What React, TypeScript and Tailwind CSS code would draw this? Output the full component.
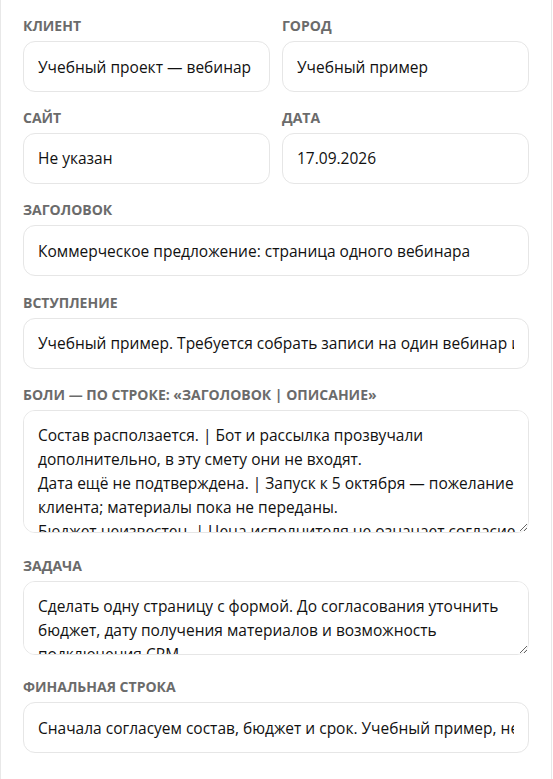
import React from "react";

const font = { fontFamily: '"Open Sans", "Noto Sans", sans-serif' };

function Label({ children }: { children: React.ReactNode }) {
  return (
    <label className="mb-[6px] block text-[14px] font-bold uppercase leading-[18px] text-[#6b6b6b]">
      {children}
    </label>
  );
}

function Input({ value }: { value: string }) {
  return (
    <input
      type="text"
      defaultValue={value}
      className="block h-[51px] w-full rounded-xl border border-[#e6e6e6] bg-white px-[14px] text-[15.5px] leading-[24px] text-[#111] outline-none"
    />
  );
}

function Area({ value, h }: { value: string; h: string }) {
  return (
    <textarea
      defaultValue={value}
      className={`${h} w-full rounded-xl border border-[#e6e6e6] bg-white pl-[14px] pr-[8px] py-[12px] text-[15.5px] leading-[24px] text-[#111] outline-none [scrollbar-width:none]`}
    />
  );
}

export default function App() {
  return (
    <div style={font} className="min-h-screen w-[552px] border-x border-[#e8e8e8] bg-white px-[22px] pt-[17px] pb-6">
      <div className="flex flex-col gap-[17.5px]">
        <div className="grid grid-cols-2 gap-x-3 gap-y-[16.5px]">
          <div>
            <Label>Клиент</Label>
            <Input value="Учебный проект — вебинар" />
          </div>
          <div>
            <Label>Город</Label>
            <Input value="Учебный пример" />
          </div>
          <div>
            <Label>Сайт</Label>
            <Input value="Не указан" />
          </div>
          <div>
            <Label>Дата</Label>
            <Input value="17.09.2026" />
          </div>
        </div>
        <div>
          <Label>Заголовок</Label>
          <Input value="Коммерческое предложение: страница одного вебинара" />
        </div>
        <div>
          <Label>Вступление</Label>
          <Input value="Учебный пример. Требуется собрать записи на один вебинар и подготовить страницу." />
        </div>
        <div>
          <Label>Боли — по строке: «заголовок | описание»</Label>
          <Area
            h="h-[123px]"
            value={
              "Состав расползается. | Бот и рассылка прозвучали дополнительно, в эту смету они не входят.\nДата ещё не подтверждена. | Запуск к 5 октября — пожелание клиента; материалы пока не переданы.\nБюджет неизвестен. | Цена исполнителя не означает согласие клиента."
            }
          />
        </div>
        <div>
          <Label>Задача</Label>
          <Area
            h="h-[74px]"
            value="Сделать одну страницу с формой. До согласования уточнить бюджет, дату получения материалов и возможность подключения CRM."
          />
        </div>
        <div>
          <Label>Финальная строка</Label>
          <Input value="Сначала согласуем состав, бюджет и срок. Учебный пример, не коммерческое предложение." />
        </div>
      </div>
    </div>
  );
}
